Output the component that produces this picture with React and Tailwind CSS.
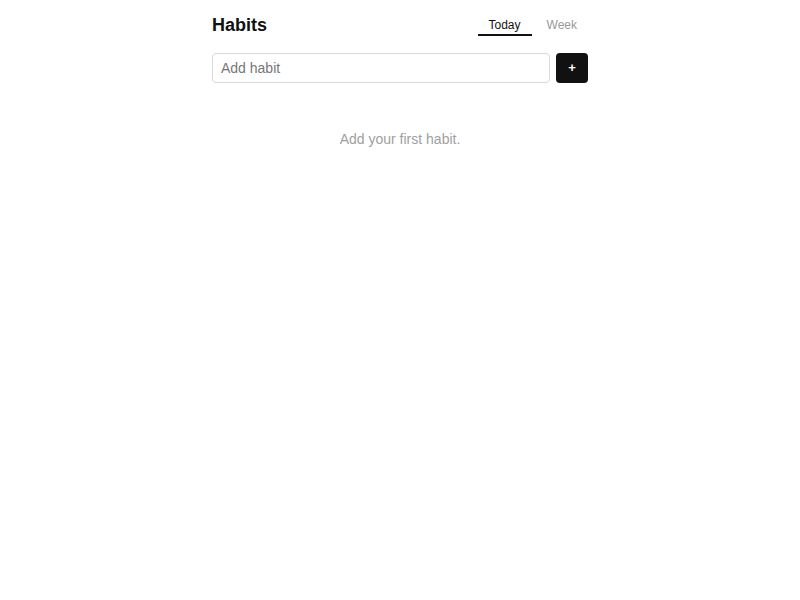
import { useState } from 'react'

// Habit-Tracker: Kopfzeile mit Tabs, Eingabe und leerer Liste.
export default function App() {
  const [tab, setTab] = useState('today')
  const [name, setName] = useState('')
  const [habits, setHabits] = useState([])

  const addHabit = () => {
    if (!name.trim()) return
    setHabits([...habits, { id: Date.now(), name: name.trim() }])
    setName('')
  }

  return (
    <div className="min-h-screen bg-white text-[#111] font-['Liberation_Sans',Arial,sans-serif]">
      <div className="w-[376px] mx-auto pt-2">
        <div className="flex items-start justify-between">
          <h1 className="mt-[5px] text-[18px] font-bold leading-6">Habits</h1>
          <div className="flex gap-1">
            {[['today', 'Today'], ['week', 'Week']].map(([key, label]) => (
              <button
                key={key}
                onClick={() => setTab(key)}
                className={`px-[11px] pt-[9px] pb-[1px] text-[12px] leading-4 border-b-2 ${tab === key ? 'border-[#111] text-[#111]' : 'border-transparent text-[#999]'}`}
              >
                {label}
              </button>
            ))}
          </div>
        </div>
        <div className="flex gap-1.5 mt-4">
          <input
            value={name}
            onChange={e => setName(e.target.value)}
            onKeyDown={e => e.key === 'Enter' && addHabit()}
            placeholder="Add habit"
            className="flex-1 min-w-0 h-[30px] px-2 text-[14px] border border-[#d9d9d9] rounded-[4px] outline-none placeholder:text-[#777]"
          />
          <button onClick={addHabit} className="w-8 h-[30px] bg-[#111] text-white text-[13px] font-bold rounded-[4px]">+</button>
        </div>
        {habits.length === 0 ? (
          <p className="mt-[46px] text-center text-[14px] leading-5 text-[#a0a0a0]">Add your first habit.</p>
        ) : (
          <ul className="mt-4">
            {habits.map(h => (
              <li key={h.id} className="py-2 text-[14px] border-b border-[#eee]">{h.name}</li>
            ))}
          </ul>
        )}
      </div>
    </div>
  )
}
